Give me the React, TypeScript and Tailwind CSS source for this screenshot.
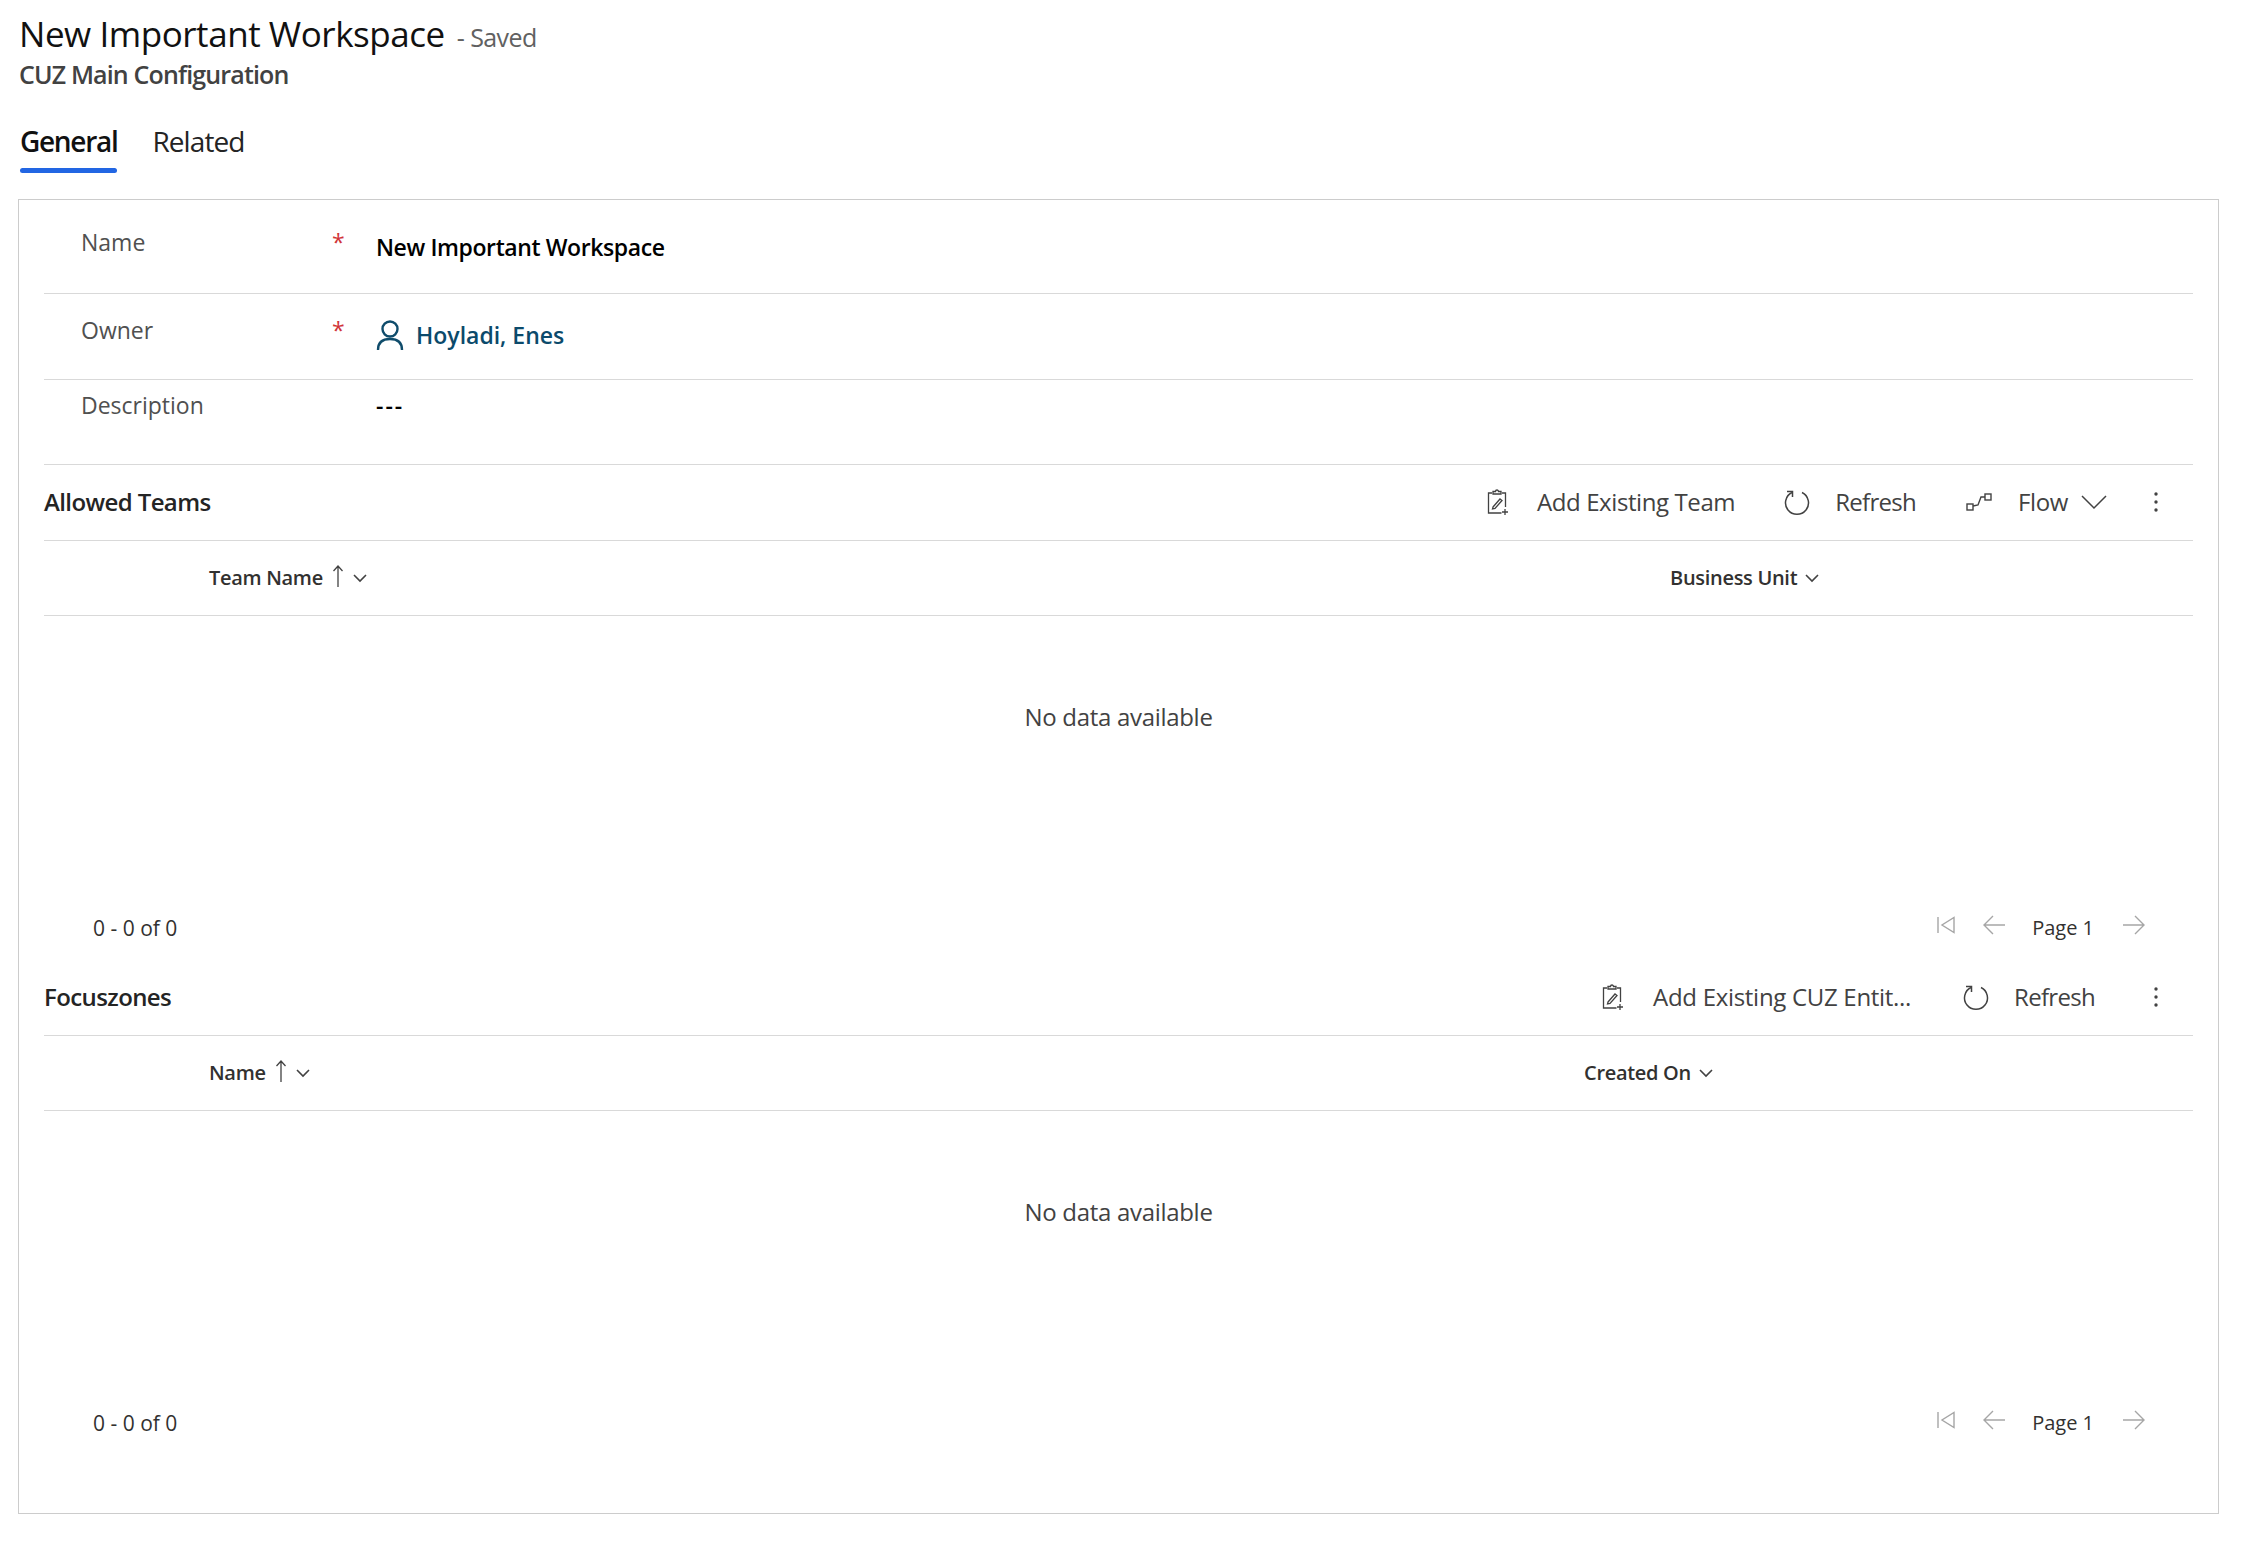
import React from "react";

const font = { fontFamily: '"Open Sans", "Noto Sans", sans-serif' };

function ClipboardIcon() {
  return (
    <svg width="24" height="28" viewBox="0 0 24 28" fill="none" stroke="#424242" strokeWidth="1.3">
      <path d="M6 5H2.5v20h13" />
      <path d="M16 5h3.5v14" />
      <path d="M7 6V3.5h2.5a1.5 1.5 0 0 1 3 0H15V6z" />
      <path d="M7 19l7-8 2 1.5-7 8-2.5.5z" />
      <path d="M19 21v6M16 24h6" />
    </svg>
  );
}

function RefreshIcon() {
  return (
    <svg width="28" height="28" viewBox="0 0 28 28" fill="none" stroke="#424242" strokeWidth="1.5">
      <path d="M9 4.5a11.5 11.5 0 1 0 10 0" />
      <path d="M4 3.5h5.5V9" />
    </svg>
  );
}

function FlowIcon() {
  return (
    <svg width="28" height="24" viewBox="0 0 28 24" fill="none" stroke="#424242" strokeWidth="1.4">
      <rect x="2" y="14" width="6" height="6" />
      <rect x="20" y="4" width="6" height="6" />
      <path d="M8 16l5-1 3-8 4 0" />
    </svg>
  );
}

function MoreIcon() {
  return (
    <svg width="6" height="24" viewBox="0 0 6 24" fill="#424242">
      <circle cx="3" cy="4" r="1.7" />
      <circle cx="3" cy="12" r="1.7" />
      <circle cx="3" cy="20" r="1.7" />
    </svg>
  );
}

function SmallChevron() {
  return (
    <svg width="14" height="10" viewBox="0 0 14 10" fill="none" stroke="#424242" strokeWidth="1.6">
      <path d="M1 2l6 6 6-6" />
    </svg>
  );
}

function SortUp() {
  return (
    <svg className="mb-1" width="12" height="24" viewBox="0 0 12 24" fill="none" stroke="#424242" strokeWidth="1.3">
      <path d="M6 23V2M1.5 7L6 2l4.5 5" />
    </svg>
  );
}

function Pager() {
  return (
    <div className="flex items-center text-[#a6a6a6]">
      <svg width="20" height="18" viewBox="0 0 20 18" fill="none" stroke="currentColor" strokeWidth="1.4">
        <path d="M2 1v16M18 1.5v15L6 9z" />
      </svg>
      <svg className="ml-[27px]" width="22" height="20" viewBox="0 0 22 20" fill="none" stroke="currentColor" strokeWidth="1.4">
        <path d="M22 10H1M10 1l-9 9 9 9" />
      </svg>
      <span className="ml-[27px] mt-[6px] text-[20px] text-[#323130]">Page 1</span>
      <svg className="ml-[29px]" width="22" height="20" viewBox="0 0 22 20" fill="none" stroke="currentColor" strokeWidth="1.4">
        <path d="M0 10h21M12 1l9 9-9 9" />
      </svg>
    </div>
  );
}

function FieldRow({
  label,
  required,
  height,
  children,
  labelClass,
  valueClass,
}: {
  label: string;
  required?: boolean;
  height: string;
  children: React.ReactNode;
  labelClass: string;
  valueClass: string;
}) {
  return (
    <div className={`flex border-b border-[#d9d9d9] ${height}`}>
      <div className={`w-[288px] pl-[37px] text-[23px] text-[#505050] ${labelClass}`}>{label}</div>
      <div className={`w-[44px] text-[23px] text-[#d13438] ${labelClass}`}>{required ? "*" : ""}</div>
      <div className={`text-[23px] text-black ${valueClass}`}>{children}</div>
    </div>
  );
}

function SubGrid({
  title,
  commands,
  firstColumn,
  secondColumn,
  secondOffset,
}: {
  title: string;
  commands: React.ReactNode;
  firstColumn: React.ReactNode;
  secondColumn: string;
  secondOffset: string;
}) {
  return (
    <section>
      <div className="flex h-[76px] items-center justify-between border-b border-[#d9d9d9] pb-[2px]">
        <h2 className="text-[24px] font-[560] tracking-[-0.6px] text-[#242424]">{title}</h2>
        {commands}
      </div>
      <div className="flex h-[75px] items-center border-b border-[#d9d9d9] text-[20px] font-semibold tracking-[-0.3px] text-[#323130]">
        <div className={secondOffset}>{firstColumn}</div>
        <div className="flex items-center gap-2">
          {secondColumn}
          <SmallChevron />
        </div>
      </div>
      <div className="flex h-[202px] items-center justify-center text-[24px] tracking-[-0.3px] text-[#424242]">
        No data available
      </div>
      <div className="flex h-[142px] items-start justify-between pl-[49px] pr-[48px] pt-[89px] text-[21px] text-[#323130]">
        <span className="mt-[6px]">0 - 0 of 0</span>
        <Pager />
      </div>
    </section>
  );
}

function Command({ icon, label, gap, labelClass }: { icon: React.ReactNode; label: string; gap: string; labelClass?: string }) {
  return (
    <div className={`flex items-center ${gap}`}>
      {icon}
      <span className={labelClass}>{label}</span>
    </div>
  );
}

export default function App() {
  return (
    <div className="min-h-screen bg-white px-[18px] pt-[10px] pb-[50px]" style={font}>
      <header className="pl-px">
        <div className="flex items-baseline">
          <h1 className="text-[35px] font-medium leading-[48px] tracking-[-0.45px] text-[#111]">New Important Workspace</h1>
          <span className="ml-[12px] text-[25px] tracking-[-0.6px] text-[#616161]">- Saved</span>
        </div>
        <p className="text-[25px] font-[560] leading-[33px] tracking-[-0.85px] text-[#424242]">CUZ Main Configuration</p>
      </header>

      <nav className="mt-[31px] flex gap-[35px] pl-[2px] text-[28px] leading-[38px] tracking-[-0.6px]">
        <div className="relative h-[51px] font-[560] tracking-[-1.3px] text-[#111]">
          General
          <span className="absolute bottom-0 left-0 right-0 h-[5px] rounded-sm bg-[#2266e3]" />
        </div>
        <div className="tracking-[-0.9px] text-[#242424]">Related</div>
      </nav>

      <main className="mt-[26px] h-[1315px] w-[2201px] border border-[#cccccc] pl-[25px] pr-[25px]">
        <FieldRow label="Name" required height="h-[94px]" labelClass="pt-[25px]" valueClass="pt-[30px] font-[560] tracking-[-0.4px]">
          New Important Workspace
        </FieldRow>
        <FieldRow label="Owner" required height="h-[86px]" labelClass="pt-[19px]" valueClass="pt-[24px]">
          <div className="flex items-center gap-[12px]">
            <svg width="28" height="32" viewBox="0 0 28 32" fill="none" stroke="#0f4c6b" strokeWidth="2.4">
              <circle cx="14" cy="10" r="7.5" />
              <path d="M2 31c0-7 4-11 12-11s12 4 12 11" />
            </svg>
            <span className="font-semibold text-[#0b4a6b]">Hoyladi, Enes</span>
          </div>
        </FieldRow>
        <FieldRow label="Description" height="h-[85px]" labelClass="pt-[8px]" valueClass="pt-[8px] font-semibold tracking-[2px]">
          ---
        </FieldRow>

        <SubGrid
          title="Allowed Teams"
          secondColumn="Business Unit"
          secondOffset="w-[1626px] pl-[165px]"
          firstColumn={
            <div className="flex items-center gap-[9px]">
              Team Name <SortUp /> <SmallChevron />
            </div>
          }
          commands={
            <div className="flex items-center pr-[34px] text-[24px] tracking-[-0.4px] text-[#424242]">
              <Command icon={<ClipboardIcon />} label="Add Existing Team" gap="gap-[27px]" />
              <div className="ml-[48px]">
                <Command icon={<RefreshIcon />} label="Refresh" gap="gap-[24px]" labelClass="tracking-[-0.7px]" />
              </div>
              <div className="ml-[49px]">
                <Command icon={<FlowIcon />} label="Flow" gap="gap-[25px]" />
              </div>
              <svg className="ml-[13px]" width="26" height="16" viewBox="0 0 26 16" fill="none" stroke="#424242" strokeWidth="1.5">
                <path d="M1 2l12 12L25 2" />
              </svg>
              <div className="ml-[46px]">
                <MoreIcon />
              </div>
            </div>
          }
        />
        <SubGrid
          title="Focuszones"
          secondColumn="Created On"
          secondOffset="w-[1540px] pl-[165px]"
          firstColumn={
            <div className="flex items-center gap-[9px]">
              Name <SortUp /> <SmallChevron />
            </div>
          }
          commands={
            <div className="flex items-center pr-[34px] text-[24px] tracking-[-0.3px] text-[#424242]">
              <Command icon={<ClipboardIcon />} label="Add Existing CUZ Entit..." gap="gap-[28px]" />
              <div className="ml-[51px]">
                <Command icon={<RefreshIcon />} label="Refresh" gap="gap-[24px]" labelClass="tracking-[-0.7px]" />
              </div>
              <div className="ml-[58px]">
                <MoreIcon />
              </div>
            </div>
          }
        />
      </main>
    </div>
  );
}
